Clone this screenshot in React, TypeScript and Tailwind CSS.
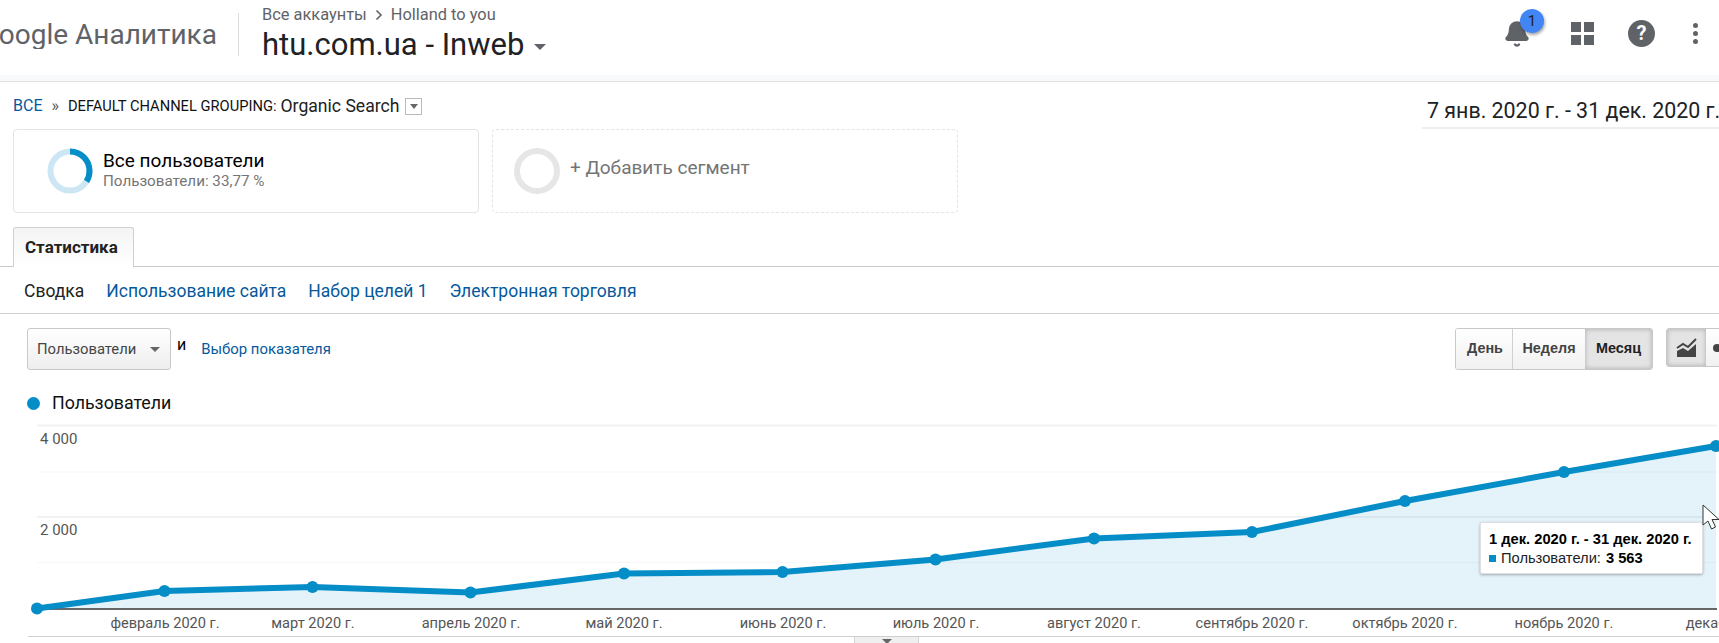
import { Bell } from "lucide-react";

const POINTS: [number, number][] = [
    [37, 608.5], [164.5, 591], [312.5, 587], [470.5, 592.5], [624, 573.5], [782.5, 572],
    [935.5, 559.5], [1094, 538.5], [1252, 532], [1405, 501], [1564, 472], [1716, 446],
];

const MONTHS: [string, number][] = [
    ["февраль 2020 г.", 165], ["март 2020 г.", 313], ["апрель 2020 г.", 471], ["май 2020 г.", 624],
    ["июнь 2020 г.", 783], ["июль 2020 г.", 936], ["август 2020 г.", 1094], ["сентябрь 2020 г.", 1252],
    ["октябрь 2020 г.", 1405], ["ноябрь 2020 г.", 1564], ["декабрь 2020 г.", 1739],
];

const Header = () => (
    <header className="h-[75px] flex items-center bg-white relative">
        <div className="text-[28px] leading-none text-[#5f6368] w-[238px] pr-[21px] whitespace-nowrap overflow-hidden shrink-0 flex justify-end -mt-[5px]">
            Google Аналитика
        </div>
        <div className="w-px h-[43px] bg-[#dadce0] -mt-[7px]"></div>
        <div className="ml-[23px] -mt-[6px]">
            <div className="text-[16.4px] leading-[18px] text-[#5f6368] flex items-center gap-[8px]">
                <span>Все аккаунты</span>
                <svg width="8" height="12" viewBox="0 0 8 12"><path d="M1.5 1.5 6 6l-4.5 4.5" fill="none" stroke="#5f6368" strokeWidth="1.6" /></svg>
                <span>Holland to you</span>
            </div>
            <div className="flex items-center mt-[3px]">
                <span className="text-[31px] leading-[36px] text-[#202124]">htu.com.ua - Inweb</span>
                <span className="ml-[10px] mt-[3px] w-0 h-0 border-x-[6.5px] border-x-transparent border-t-[6px] border-t-[#5f6368]"></span>
            </div>
        </div>
        <div className="ml-auto flex items-center -mt-[8px]">
            <div className="relative mr-[40px]">
                <Bell size={28} fill="#5f6368" stroke="#5f6368" />
                <span className="absolute -top-[11px] left-[17px] w-[24px] h-[24px] rounded-full bg-[#4285f4] text-[15px] leading-[24px] text-center text-[#202124] shadow-[1px_2px_3px_rgba(0,0,0,0.35)]">1</span>
            </div>
            <div className="grid grid-cols-2 gap-[3px] mr-[34px]">
                <span className="w-[10px] h-[10px] bg-[#5f6368]"></span>
                <span className="w-[10px] h-[10px] bg-[#5f6368]"></span>
                <span className="w-[10px] h-[10px] bg-[#5f6368]"></span>
                <span className="w-[10px] h-[10px] bg-[#5f6368]"></span>
            </div>
            <div className="w-[27px] h-[27px] rounded-full bg-[#5f6368] text-white text-[20px] leading-[27px] font-bold text-center mr-[38px]">?</div>
            <div className="flex flex-col gap-[3px] mr-[21px]">
                <span className="w-[5px] h-[5px] rounded-full bg-[#5f6368]"></span>
                <span className="w-[5px] h-[5px] rounded-full bg-[#5f6368]"></span>
                <span className="w-[5px] h-[5px] rounded-full bg-[#5f6368]"></span>
            </div>
        </div>
    </header>
);

const Segments = () => (
    <div className="flex gap-[13px] pl-[13px] h-[84px]">
        <div className="w-[466px] border border-[#e4e4e4] rounded-[4px] flex items-center pl-[33px]">
            <svg width="46" height="46" viewBox="0 0 46 46" className="shrink-0">
                <circle cx="23" cy="23" r="19.5" fill="none" stroke="#cde6f4" strokeWidth="6" />
                <circle cx="23" cy="23" r="19.5" fill="none" stroke="#058dc7" strokeWidth="6" strokeDasharray="41.4 122.6" transform="rotate(-90 23 23)" />
            </svg>
            <div className="ml-[10px] -mt-[2px]">
                <div className="text-[19px] leading-[22px] text-black">Все пользователи</div>
                <div className="text-[15.2px] leading-[18px] text-[#757575]">Пользователи: 33,77 %</div>
            </div>
        </div>
        <div className="w-[466px] border border-dashed border-[#e4e4e4] rounded-[4px] flex items-center pl-[21px]">
            <span className="w-[46px] h-[46px] rounded-full border-[6px] border-[#e6e6e6] shrink-0"></span>
            <span className="ml-[10px] text-[19px] text-[#757575] -mt-[6px]">+ Добавить сегмент</span>
        </div>
    </div>
);

const Nav = () => (
    <>
        <div className="h-[40px] mt-[14px] border-b border-[#c9c9c9] pl-[13px]">
            <div className="w-[121px] h-[40px] border border-b-0 border-[#d0d0d0] rounded-t-[3px] bg-gradient-to-b from-[#f4f4f4] to-white text-[17px] font-bold text-[#222] flex items-center pl-[11px] pt-[1px]">
                Статистика
            </div>
        </div>
        <div className="h-[47px] border-b border-[#cfcfcf] flex items-center pl-[24px] pt-[3px] gap-[22px] text-[17.5px] text-[#05599c]">
            <span className="text-[#222]">Сводка</span>
            <span>Использование сайта</span>
            <span>Набор целей 1</span>
            <span>Электронная торговля</span>
        </div>
    </>
);

const Controls = () => (
    <div className="flex pt-[14px] h-[56px]">
        <div className="ml-[27px] w-[144px] h-[42px] border border-[#c8c8c8] rounded-[3px] bg-gradient-to-b from-white to-[#eeeeee] flex items-center pl-[9px] text-[14.8px] text-[#444]">
            Пользователи
            <span className="ml-[14px] w-0 h-0 border-x-[5.5px] border-x-transparent border-t-[5px] border-t-[#666]"></span>
        </div>
        <span className="ml-[6px] mt-[8px] text-[16px] text-black leading-[18px]">и</span>
        <span className="ml-[15px] mt-[12px] text-[14.9px] leading-[18px] text-[#05599c]">Выбор показателя</span>
        <div className="ml-auto flex h-[42px] border border-[#c8c8c8] rounded-[3px] text-[14.4px] font-bold text-[#444] overflow-hidden font-['Liberation_Sans',sans-serif]">
            <span className="w-[57px] flex items-center justify-center border-r border-[#d0d0d0] bg-gradient-to-b from-white to-[#f1f1f1] pl-[2px]">День</span>
            <span className="w-[72px] flex items-center justify-center bg-gradient-to-b from-white to-[#f1f1f1]">Неделя</span>
            <span className="w-[67px] flex items-center justify-center bg-[#e4e4e4] text-[#222] shadow-[inset_0_0_5px_rgba(0,0,0,0.25)]">Месяц</span>
        </div>
        <div className="ml-[13px] mr-[-40px] w-[93px] shrink-0 flex h-[39px] border border-[#c8c8c8] rounded-[3px] overflow-hidden">
            <span className="w-[39px] flex items-center justify-center bg-[#e4e4e4] shadow-[inset_0_0_5px_rgba(0,0,0,0.25)]">
                <svg width="22" height="22" viewBox="0 0 22 22">
                    <path d="M1 20v-6l6-3 5 3 8-7v13z" fill="#444" />
                    <path d="M1 11l6-4 5 3 8-8" fill="none" stroke="#444" strokeWidth="2" />
                </svg>
            </span>
            <span className="flex-1 flex items-center pl-[7px] bg-gradient-to-b from-white to-[#f1f1f1]">
                <span className="w-[8px] h-[8px] rounded-full bg-[#444]"></span>
            </span>
        </div>
    </div>
);

const Chart = () => {
    const line = POINTS.map((p) => p.join(",")).join(" ");
    return (
        <div className="relative h-[216px]">
            <svg width="1719" height="216" viewBox="0 420 1719 216" className="block">
                <line x1="37" x2="1717" y1="425.5" y2="425.5" stroke="#f2f2f2" strokeWidth="2" />
                <line x1="37" x2="1717" y1="472" y2="472" stroke="#f7f7f7" />
                <line x1="37" x2="1717" y1="517" y2="517" stroke="#f2f2f2" strokeWidth="2" />
                <line x1="37" x2="1717" y1="562.5" y2="562.5" stroke="#f7f7f7" />
                <polygon points={`37,608 ${line} 1716,608`} fill="#058dc7" fillOpacity="0.11" />
                <line x1="37" x2="1717" y1="609" y2="609" stroke="#333" strokeWidth="1.5" />
                <polyline points={line} fill="none" stroke="#058dc7" strokeWidth="6" />
                {POINTS.map(([x, y]) => (
                    <circle key={x} cx={x} cy={y} r="6" fill="#058dc7" />
                ))}
                {MONTHS.map(([label, x]) => (
                    <text key={label} x={x} y="628" textAnchor="middle" fontSize="14.6" fill="#555">{label}</text>
                ))}
                <text x="40" y="444" fontSize="15" fill="#555">4 000</text>
                <text x="40" y="535" fontSize="15" fill="#555">2 000</text>
            </svg>
            <div className="absolute left-[1480px] top-[102px] w-[223px] h-[52px] bg-white border border-[#e0e0e0] rounded-[2px] shadow-[0_1px_3px_rgba(0,0,0,0.3)] pl-[8px] pt-[7px] text-[14.7px] leading-[19px] text-[#222] font-['Liberation_Sans',sans-serif] whitespace-nowrap">
                <div className="font-bold text-black">1 дек. 2020 г. - 31 дек. 2020 г.</div>
                <div className="flex items-center">
                    <span className="w-[7px] h-[7px] bg-[#058dc7] mr-[5px]"></span>
                    <span>Пользователи:</span>
                    <span className="font-bold ml-[5px] text-black">3 563</span>
                </div>
            </div>
            <svg width="18" height="28" viewBox="0 0 18 28" className="absolute left-[1702px] top-[84px]">
                <path d="M1 1v20l5-4 3.5 8 4-2-3.5-7.5h7z" fill="#fff" stroke="#333" strokeWidth="1" />
            </svg>
        </div>
    );
};

export default function App() {
    return (
        <div className="w-[1719px] h-[643px] overflow-hidden bg-white font-['Roboto',sans-serif]">
            <Header />
            <div className="h-[7px] bg-[#f8f9fa] border-b border-[#e2e2e2]"></div>
            <div className="h-[47px] flex pl-[13px] pt-[14px] text-[#222]">
                <div className="flex items-center h-[20px]">
                    <span className="text-[16px] text-[#05599c]">ВСЕ</span>
                    <span className="text-[16px] text-[#555] ml-[9px]">»</span>
                    <span className="text-[14.7px] text-[#111] ml-[9px]">DEFAULT CHANNEL GROUPING:</span>
                    <span className="text-[17.6px] text-[#222] ml-[4px]">Organic Search</span>
                    <span className="ml-[6px] w-[17px] h-[17px] border border-[#bbb] flex items-center justify-center">
                        <span className="w-0 h-0 border-x-[4px] border-x-transparent border-t-[5px] border-t-[#666]"></span>
                    </span>
                </div>
                <div className="ml-auto mr-[-10px] w-[307px] h-[33px] shrink-0 border-b-2 border-[#eeeeee] pl-[5px] text-[21.4px] leading-[30px] text-[#202124] whitespace-nowrap">
                    7 янв. 2020 г. - 31 дек. 2020 г.
                </div>
            </div>
            <Segments />
            <Nav />
            <Controls />
            <div className="h-[50px] flex items-center pl-[27px] pt-[16px]">
                <span className="w-[13px] h-[13px] rounded-full bg-[#058dc7]"></span>
                <span className="ml-[12px] text-[17.8px] text-[#111]">Пользователи</span>
            </div>
            <Chart />
            <div className="ml-[28px] border-t border-[#cfcfcf] flex">
                <div className="ml-[826px] w-[65px] h-[7px] bg-[#efefef] border-x border-[#d5d5d5] flex justify-center pt-[2px]">
                    <span className="w-0 h-0 border-x-[5px] border-x-transparent border-t-[5px] border-t-[#666]"></span>
                </div>
            </div>
        </div>
    );
}
